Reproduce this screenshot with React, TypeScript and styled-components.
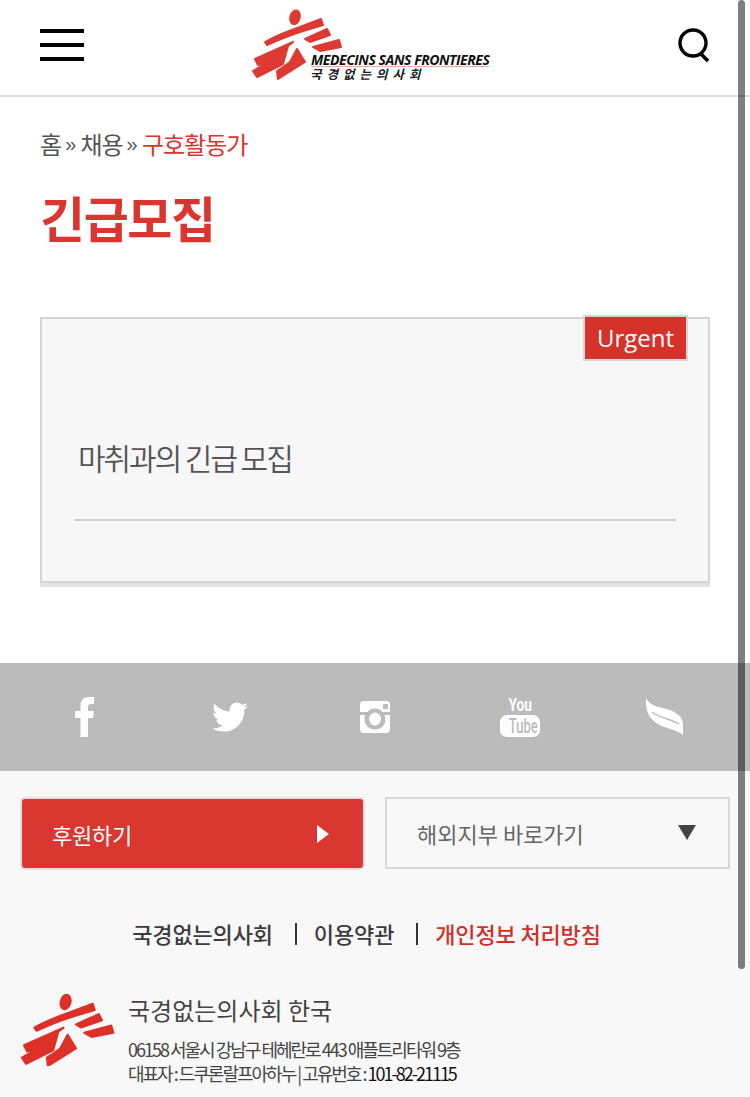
import React from 'react';
import styled, { createGlobalStyle } from 'styled-components';
import { FaTwitter } from 'react-icons/fa';

const KR = `"Noto Sans CJK KR", "Noto Sans", sans-serif`;

const Global = createGlobalStyle`
  html, body { margin: 0; padding: 0; height: 1097px; overflow: hidden; background: #fff; }
  body { font-family: ${KR}; }
  * { box-sizing: border-box; }
`;

const Page = styled.div`width: 750px; height: 1097px; overflow: hidden; position: relative;`;

const Scrollbar = styled.div`
  position: absolute; top: 0; right: 5px; width: 7px; height: 969px;
  background: rgba(0,0,0,0.5); border-radius: 4px;
`;

const Header = styled.header`
  height: 97px; border-bottom: 2px solid #ddd; display: grid;
  grid-template-columns: 44px 1fr 34px; align-items: center; padding: 0 39px 0 40px; background: #fff;
`;
const Burger = styled.div`
  display: flex; flex-direction: column; gap: 10px; width: 44px; margin-top: -5px;
  span { display: block; height: 4px; background: #000; }
`;
const LogoWrap = styled.div`display: flex; justify-content: center; margin-top: -7px;`;
const LogoBox = styled.div`position: relative; width: 260px; height: 90px; margin-left: -21px;`;
const LogoEn = styled.div`
  position: absolute; left: 71px; top: 54px; width: 178px; height: 14px; white-space: nowrap;
  font: italic 700 14px/13px "Open Sans", sans-serif; letter-spacing: -0.45px; color: #111;
  border-bottom: 1px solid #f1a9a5;
`;
const LogoKr = styled.div`
  position: absolute; left: 70px; top: 68px; white-space: nowrap;
  font: italic 700 12.5px/14px ${KR}; letter-spacing: 5px; color: #222;
`;
const Search = styled.svg`display: block; margin-top: -4px;`;
const ManGroup = styled.g`stroke: currentColor; stroke-width: 6px; stroke-linejoin: round;`;

const Main = styled.main`padding: 0 40px; background: #fff; height: 566px;`;
const Crumbs = styled.div`
  padding-top: 30px; font-size: 24px; line-height: 34px; color: #555; letter-spacing: -1.2px;
  display: flex; gap: 4.25px; font-weight: 400;
`;
const CrumbSep = styled.span`font-family: "Liberation Sans", sans-serif; letter-spacing: 0; font-size: 20px;`;
const CrumbNow = styled.span`color: #d9362f; letter-spacing: -1px;`;
const Title = styled.h1`
  margin: 20px 0 0; font-size: 49px; line-height: 72px; font-weight: 700; color: #d9362f; letter-spacing: -1.4px;
`;
const Card = styled.section`
  position: relative; margin-top: 64px; height: 266px; background: #f7f7f7;
  border: 2px solid #d5d5d5; box-shadow: 0 4px 0 #e2e2e2; padding: 0 32px;
`;
const Badge = styled.div`
  position: absolute; top: -4px; right: 20px; width: 105px; height: 46px; background: #d5322a;
  border: 2px solid #d5d5d5; color: #fff; font: 400 24px/42px "Open Sans", sans-serif; text-align: center;
`;
const CardTitle = styled.h2`
  margin: 0; padding: 116px 0 0 4px; height: 202px; border-bottom: 2px solid #d0d0d0;
  font-size: 30px; line-height: 44px; font-weight: 350; color: #555; letter-spacing: -2.05px;
`;

const Social = styled.nav`
  height: 108px; background: #bbb; display: grid; grid-template-columns: repeat(5, 1fr);
  padding: 0 12px; align-items: center; justify-items: center; color: #fff;
`;
const YouTube = styled.div`display: flex; flex-direction: column; align-items: center; width: 40px;`;
const You = styled.span`font: 700 19px/15px "Roboto", sans-serif; color: #fff; transform: scaleX(0.72); height: 18px;`;
const Tube = styled.span`
  display: block; width: 40px; height: 22px; border-radius: 7px; background: #fff; color: #bbb; text-align: center;
  font: 500 21px/22px "Roboto", sans-serif;
  span { display: inline-block; transform: scaleX(0.62); }
`;

const Footer = styled.footer`background: #f8f8f8; height: 326px; padding: 26px 20px 0;`;
const Buttons = styled.div`display: grid; grid-template-columns: 345px 345px; gap: 20px;`;
const Donate = styled.a`
  height: 73px; background: #d9372f; border: 2px solid #e0e0e0; border-radius: 5px; color: #fff;
  display: flex; align-items: center; justify-content: space-between; padding: 0 34px 0 30px;
  font-size: 22px; letter-spacing: -0.2px;
`;
const Branch = styled.a`
  height: 72px; border: 2px solid #d8d8d8; color: #666; background: #f8f8f8;
  display: flex; align-items: center; justify-content: space-between; padding: 0 32px 0 30px;
  font-size: 22px;
`;
const TriRight = styled.i`
  width: 0; height: 0; border-left: 12px solid #fff; border-top: 9px solid transparent; border-bottom: 9px solid transparent;
`;
const TriDown = styled.i`
  width: 0; height: 0; border-top: 15px solid #444; border-left: 9px solid transparent; border-right: 9px solid transparent; margin-top: -2px;
`;
const Links = styled.div`
  display: flex; justify-content: center; align-items: center; margin: 46px 0 0 -17px; height: 34px;
  font-size: 22px; font-weight: 500; color: #3c3c3c; letter-spacing: -0.15px;
`;
const LinkItem = styled.a<{ $red?: boolean; $sep?: boolean }>`
  color: ${p => (p.$red ? '#d42f27' : '#3c3c3c')};
  padding: 0 ${p => (p.$sep ? 24 : 0)}px 0 0;
  margin-right: ${p => (p.$sep ? 17 : 0)}px;
  position: relative;
  &::after {
    content: ${p => (p.$sep ? "''" : 'none')};
    position: absolute; right: 0; top: 6px; width: 2px; height: 22px; background: #333;
  }
`;
const Org = styled.div`display: flex; margin-top: 43px; gap: 12px;`;
const OrgLogo = styled.div`flex: none; margin-top: 1px; color: #dd3027;`;
const OrgText = styled.div`min-width: 0; white-space: nowrap;`;
const OrgName = styled.div`font-size: 24px; line-height: 34px; color: #444; font-weight: 400; margin-bottom: 10px;`;
const OrgLine = styled.div`font-size: 18px; line-height: 24px; color: #444; letter-spacing: -2px; word-spacing: 0; font-weight: 400;`;
const OrgLast = styled(OrgLine)`margin-top: 8px;`;
const OrgNum = styled.span`color: #111;`;
const LogoRed = styled.div`color: #dd3a32;`;

const ManShapes = () => (
  <ManGroup>
    <ellipse cx="165" cy="55" rx="14" ry="21" transform="rotate(15 165 55)" />
    <path d="M75 129 C100 115 140 98 180 84 L243 60 L249 78 L180 99 C145 110 110 125 81 138 Z" />
    <path d="M195 120 L261 90 L270 108 L210 129 Z" />
    <path d="M219 144 L297 123 L303 144 L240 156 Z" />
    <path d="M45 180 L159 129 L144 141 L129 195 L51 234 L39 216 L90 186 L54 198 Z" />
    <path d="M111 216 L129 204 L150 189 L171 150 L195 189 L114 240 Z" />
  </ManGroup>
);

export default function App() {
  return (
    <Page>
      <Global />
      <Header>
        <Burger><span /><span /><span /></Burger>
        <LogoWrap>
          <LogoBox>
            <LogoRed>
              <svg width="260" height="90" viewBox="0 0 780 270" fill="currentColor" style={{ display: 'block' }}>
                <ManShapes />
              </svg>
            </LogoRed>
            <LogoEn>MEDECINS SANS FRONTIERES</LogoEn>
            <LogoKr>국경없는의사회</LogoKr>
          </LogoBox>
        </LogoWrap>
        <Search width="34" height="36" viewBox="0 0 34 36">
          <circle cx="16" cy="15" r="13" fill="none" stroke="#000" strokeWidth="3.4" />
          <path d="M23 25 L31 33" stroke="#000" strokeWidth="3.6" />
        </Search>
      </Header>
      <Main>
        <Crumbs>
          <span>홈</span><CrumbSep>»</CrumbSep><span>채용</span><CrumbSep>»</CrumbSep><CrumbNow>구호활동가</CrumbNow>
        </Crumbs>
        <Title>긴급모집</Title>
        <Card>
          <Badge>Urgent</Badge>
          <CardTitle>마취과의 긴급 모집</CardTitle>
        </Card>
      </Main>
      <Social>
        <svg width="19" height="40" viewBox="0 0 19 40" fill="#fff">
          <path d="M5.500 40 V21 H0 V14 H5.500 V9 C5.500 3 9 0 14 0 H19 V7 H16 C13.500 7 13 8 13 10 V14 H19 L18 21 H13 V40Z" />
        </svg>
        <FaTwitter size={36} />
        <svg width="32" height="34" viewBox="0 0 32 34" fill="#fff">
          <path fillRule="evenodd" d="M5 1H27a4 4 0 0 1 4 4V12H23.500C21.500 9.500 19 8.500 16 8.500S10.500 9.500 8.500 12H1V5a4 4 0 0 1 4-4Z M24 4V9H29V4Z" />
          <path fillRule="evenodd" d="M1 15H6.500C5.800 16.500 5.500 17.500 5.500 19C5.500 25 10 29.500 16 29.500S26.500 25 26.500 19C26.500 17.500 26.200 16.500 25.500 15H31V29a4 4 0 0 1-4 4H5a4 4 0 0 1-4-4Z" />
          <ellipse cx="16" cy="19" rx="6" ry="6.500" />
        </svg>
        <YouTube>
          <You>You</You>
          <Tube><span>Tube</span></Tube>
        </YouTube>
        <svg width="40" height="38" viewBox="0 0 40 38" fill="#fff">
          <path d="M1 0 C5 8 14 9 22 11 C31 14 39 18 38 30 L38 37 C31 31 21 31 13 26 C4 21 0 12 1 0Z" />
          <path d="M7 14 C15 20 25 21 34 26" fill="none" stroke="#bbb" strokeWidth="1.4" />
        </svg>
      </Social>
      <Footer>
        <Buttons>
          <Donate>후원하기<TriRight /></Donate>
          <Branch>해외지부 바로가기<TriDown /></Branch>
        </Buttons>
        <Links>
          <LinkItem $sep>국경없는의사회</LinkItem>
          <LinkItem $sep>이용약관</LinkItem>
          <LinkItem $red>개인정보 처리방침</LinkItem>
        </Links>
        <Org>
          <OrgLogo>
            <svg width="96" height="72" viewBox="38 32 268 208" fill="currentColor" style={{ display: 'block' }}>
              <ManShapes />
            </svg>
          </OrgLogo>
          <OrgText>
            <OrgName>국경없는의사회 한국</OrgName>
            <OrgLine>06158 서울시 강남구 테헤란로 443 애플트리타워 9층</OrgLine>
            <OrgLine>대표자 : 드쿠론랄프아하누 | 고유번호 : <OrgNum>101-82-21115</OrgNum></OrgLine>
            <OrgLast>02-3703-3500 후원문의전화</OrgLast>
          </OrgText>
        </Org>
      </Footer>
      <Scrollbar />
    </Page>
  );
}
